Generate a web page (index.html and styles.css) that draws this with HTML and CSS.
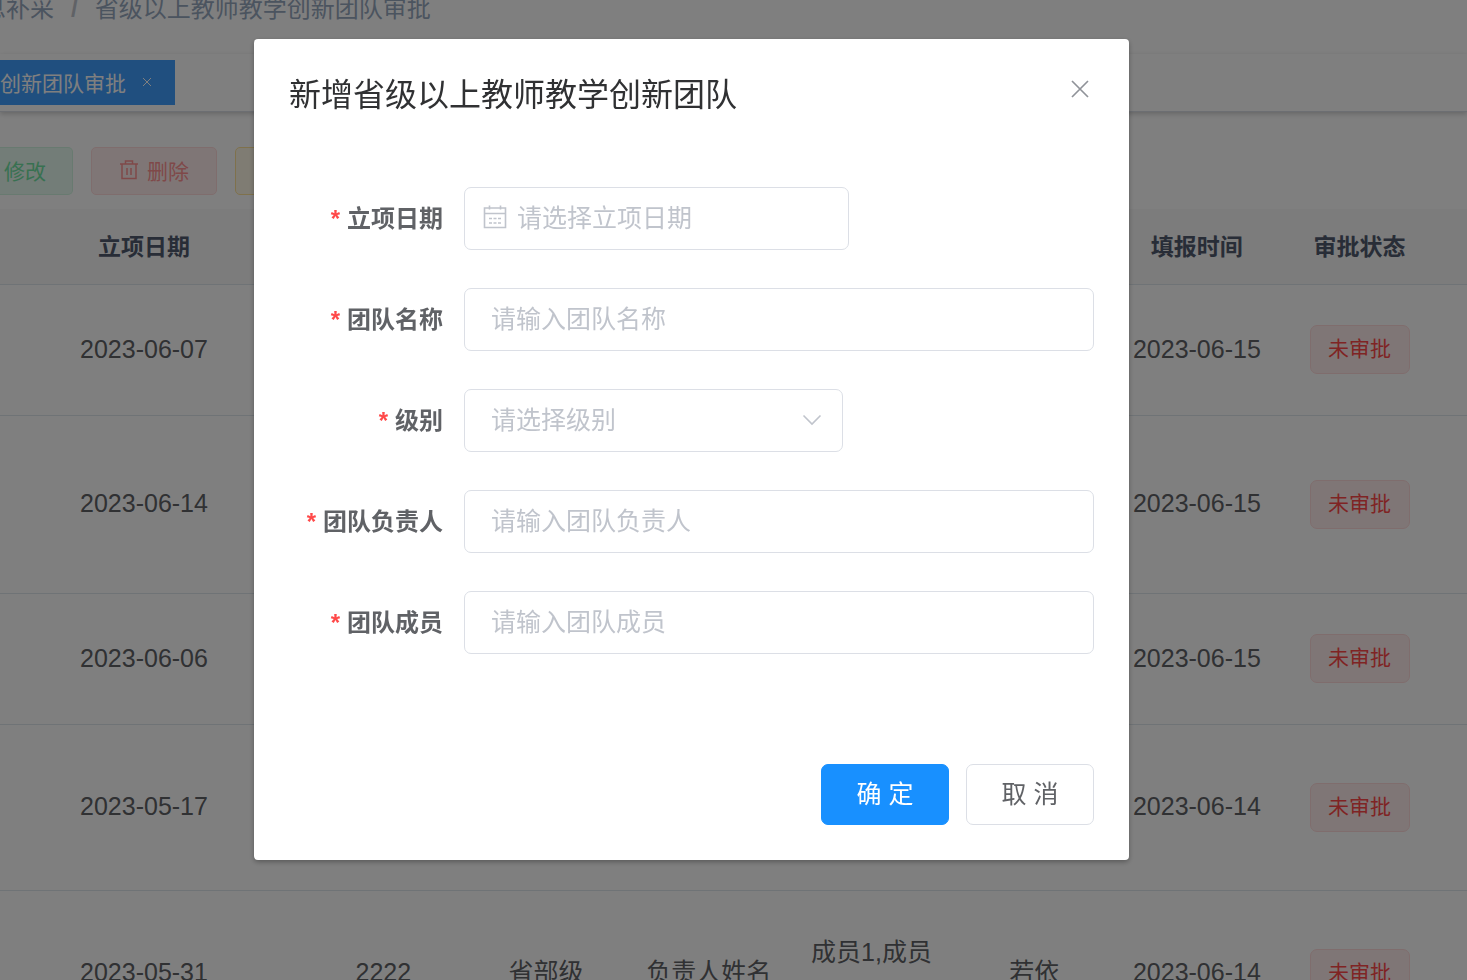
FILE: index.html
```html
<!DOCTYPE html>
<html lang="zh-CN">
<head>
<meta charset="utf-8">
<title>省级以上教师教学创新团队审批</title>
<link rel="stylesheet" href="styles.css">
</head>
<body>
<div class="page">
  <nav class="navbar">
    <a class="crumb" href="#">息补采</a>
    <span class="crumb-separator">/</span>
    <span class="crumb">省级以上教师教学创新团队审批</span>
  </nav>
  <div class="tags-view">
    <a class="tag-tab" href="#">创新团队审批
      <svg class="tag-close" viewBox="0 0 12 12"><path d="M2 2l8 8M10 2l-8 8"/></svg>
    </a>
  </div>
  <main>
    <div class="toolbar">
      <button class="btn btn-success" type="button" disabled>修改</button>
      <button class="btn btn-danger" type="button" disabled>
        <svg class="btn-icon" viewBox="0 0 20 20"><path d="M1 4h18M6.500 4V1h7v3M3 4v14.500h14V4M8 8v7M12 8v7"/></svg>
        删除
      </button>
      <button class="btn btn-warning" type="button" aria-label="导出"></button>
    </div>
    <table class="data-table">
      <colgroup><col class="col-date"><col><col><col><col><col><col><col><col class="col-end"></colgroup>
      <thead>
        <tr><th class="date">立项日期</th><th></th><th></th><th></th><th></th><th></th><th>填报时间</th><th>审批状态</th><th></th></tr>
      </thead>
      <tbody>
        <tr class="row-short"><td class="date">2023-06-07</td><td></td><td></td><td></td><td></td><td></td><td>2023-06-15</td><td><span class="status">未审批</span></td><td></td></tr>
        <tr class="row-tall"><td class="date">2023-06-14</td><td></td><td></td><td></td><td></td><td></td><td>2023-06-15</td><td><span class="status">未审批</span></td><td></td></tr>
        <tr class="row-short"><td class="date">2023-06-06</td><td></td><td></td><td></td><td></td><td></td><td>2023-06-15</td><td><span class="status">未审批</span></td><td></td></tr>
        <tr class="row-medium"><td class="date">2023-05-17</td><td></td><td></td><td></td><td></td><td></td><td>2023-06-14</td><td><span class="status">未审批</span></td><td></td></tr>
        <tr class="row-medium"><td class="date">2023-05-31</td><td>2222</td><td>省部级</td><td>负责人姓名</td><td class="members">成员1,成员</td><td>若依</td><td>2023-06-14</td><td><span class="status">未审批</span></td><td></td></tr>
      </tbody>
    </table>
  </main>
</div>

<div class="overlay">
  <section class="dialog" role="dialog" aria-labelledby="dialog-title">
    <header class="dialog-header">
      <h2 class="dialog-title" id="dialog-title">新增省级以上教师教学创新团队</h2>
      <button class="dialog-close" type="button" aria-label="关闭">
        <svg viewBox="0 0 20 20"><path d="M2 2l16 16M18 2L2 18"/></svg>
      </button>
    </header>
    <form class="form">
      <div class="form-item">
        <label class="form-label" for="date">立项日期</label>
        <div class="control control-date">
          <svg class="calendar" viewBox="0 0 24 24"><path d="M1.500 3h21v19.500h-21zM1.500 8.500h21M6.500.500v4M17.500.500v4M6 13.500h3M10.500 13.500h3M15 13.500h3M6 18h3M10.500 18h3M15 18h3"/></svg>
          <input class="field field-date" id="date" type="text" placeholder="请选择立项日期">
        </div>
      </div>
      <div class="form-item">
        <label class="form-label" for="name">团队名称</label>
        <div class="control"><input class="field" id="name" type="text" placeholder="请输入团队名称"></div>
      </div>
      <div class="form-item">
        <label class="form-label" for="level">级别</label>
        <div class="control control-select">
          <select class="field field-select" id="level"><option>请选择级别</option></select>
          <svg class="chevron" viewBox="0 0 20 12"><path d="M1.500 1.500l8.500 8.500 8.500-8.500"/></svg>
        </div>
      </div>
      <div class="form-item">
        <label class="form-label" for="leader">团队负责人</label>
        <div class="control"><input class="field" id="leader" type="text" placeholder="请输入团队负责人"></div>
      </div>
      <div class="form-item">
        <label class="form-label" for="members">团队成员</label>
        <div class="control"><input class="field" id="members" type="text" placeholder="请输入团队成员"></div>
      </div>
    </form>
    <footer class="dialog-footer">
      <button class="action action-primary" type="button">确 定</button>
      <button class="action" type="button">取 消</button>
    </footer>
  </section>
</div>
</body>
</html>
```
FILE: styles.css
```css
* {
  box-sizing: border-box;
}

body {
  margin: 0;
  overflow: hidden;
  background: #fff;
  color: #606266;
  font-family: "Liberation Sans", "Noto Sans CJK SC", sans-serif;
  font-size: 25px;
}

button,
input,
select {
  font-family: inherit;
}

svg {
  fill: none;
  stroke: currentColor;
}

.page {
  height: 100vh;
  overflow: hidden;
}

/* Top bars */
.navbar {
  display: flex;
  height: 54px;
  margin-left: -18px;
  line-height: 18px;
  font-size: 24px;
  white-space: nowrap;
  box-shadow: 0 2px 7px rgba(0, 21, 41, 0.08);
}

.crumb {
  color: #97a8be;
  text-decoration: none;
}

.crumb-separator {
  margin: 0 17px;
  color: #c0c4cc;
  font-weight: bold;
}

.tags-view {
  position: relative;
  display: flex;
  align-items: center;
  height: 58px;
  background: #fff;
  border-bottom: 1px solid #d8dce5;
  box-shadow: 0 2px 5px rgba(0, 0, 0, 0.2);
}

.tag-tab {
  display: flex;
  align-items: center;
  gap: 15px;
  height: 45px;
  padding-right: 22px;
  padding-bottom: 1px;
  background: #409eff;
  color: #fff;
  font-size: 21px;
  text-decoration: none;
}

.tag-close {
  width: 12px;
  height: 12px;
}

/* Toolbar */
.toolbar {
  display: flex;
  gap: 18px;
  padding-top: 35px;
  padding-bottom: 14px;
}

.btn {
  display: flex;
  align-items: center;
  justify-content: center;
  gap: 8px;
  width: 126px;
  height: 48px;
  padding: 0 0 3px;
  border: 1px solid;
  border-radius: 5px;
  font-size: 21px;
}

.btn-success {
  width: 73px;
  padding-right: 22px;
  border-color: #d0f5e0;
  border-left: 0;
  border-radius: 0 5px 5px 0;
  background: #e7faf0;
  color: #71e2a3;
}

.btn-danger {
  border-color: #ffdbdb;
  background: #ffeded;
  color: #ff9292;
}

.btn-warning {
  border-color: #ffe399;
  background: #fff8e6;
}

.btn-icon {
  width: 20px;
  height: 20px;
  stroke-width: 1.5;
}

/* Table */
.data-table {
  width: 100%;
  table-layout: fixed;
  border-collapse: separate;
  border-spacing: 0;
  text-align: center;
}

.col-date {
  width: 302px;
}

.col-end {
  width: 26px;
}

.data-table th {
  height: 76px;
  padding: 0 0 4px;
  background: #f8f8f9;
  border-bottom: 1px solid #dfe6ec;
  color: #515a6e;
  font-size: 23px;
}

.data-table td {
  padding: 0 0 3px;
  border-bottom: 1px solid #dfe6ec;
  font-size: 25px;
  line-height: 40px;
  white-space: nowrap;
}

.data-table .date {
  padding-right: 14px;
}

.data-table .members {
  padding-bottom: 43px;
}

.row-short {
  height: 131px;
}

.row-medium {
  height: 166px;
}

.row-tall {
  height: 178px;
}

.status {
  display: block;
  width: 100px;
  height: 49px;
  margin: 2px auto 0;
  border: 1px solid #ffdbdb;
  border-radius: 7px;
  background: #ffeded;
  color: #ff4949;
  font-size: 21px;
  line-height: 45px;
}

/* Dialog */
.overlay {
  position: fixed;
  inset: 0;
  display: flex;
  align-items: flex-start;
  justify-content: center;
  padding: 39px 84px 0 0;
  background: rgba(0, 0, 0, 0.5);
}

.dialog {
  width: 875px;
  max-width: 100%;
  padding: 35px;
  border-radius: 4px;
  background: #fff;
  box-shadow: 0 2px 5px rgba(0, 0, 0, 0.3);
}

.dialog-header {
  display: flex;
  align-items: flex-start;
  justify-content: space-between;
}

.dialog-title {
  margin: 0;
  color: #303133;
  font-size: 32px;
  font-weight: normal;
  line-height: 42px;
}

.dialog-close {
  display: flex;
  padding: 5px 4px;
  border: 0;
  background: none;
  color: #909399;
}

.dialog-close svg {
  width: 20px;
  height: 20px;
  stroke-width: 1.7;
}

.form {
  display: flex;
  flex-direction: column;
  gap: 38px;
  padding-top: 71px;
}

.form-item {
  display: flex;
  height: 63px;
}

.form-label {
  width: 175px;
  padding-right: 21px;
  font-size: 24px;
  font-weight: bold;
  line-height: 64px;
  text-align: right;
  white-space: nowrap;
}

.form-label::before {
  content: "*";
  margin-right: 7px;
  color: #ff4949;
}

.control {
  position: relative;
  flex: 1;
}

.control-date {
  flex: 0 0 385px;
}

.control-select {
  flex: 0 0 379px;
}

.field {
  display: block;
  width: 100%;
  height: 63px;
  padding: 0 26px;
  border: 1px solid #dcdfe6;
  border-radius: 7px;
  background: #fff;
  color: #606266;
  font-size: 25px;
}

.field::placeholder {
  color: #c0c4cc;
}

.field-date {
  padding-left: 52px;
}

.field-select {
  padding-bottom: 2px;
  appearance: none;
  color: #c0c4cc;
}

.calendar {
  position: absolute;
  top: 18px;
  left: 19px;
  width: 24px;
  height: 24px;
  color: #c0c4cc;
  stroke-width: 1.6;
}

.chevron {
  position: absolute;
  top: 25px;
  right: 21px;
  width: 20px;
  height: 12px;
  color: #c0c4cc;
  stroke-width: 1.6;
}

.dialog-footer {
  display: flex;
  justify-content: flex-end;
  gap: 17px;
  padding-top: 110px;
}

.action {
  width: 128px;
  height: 61px;
  padding: 0 0 6px;
  border: 1px solid #dcdfe6;
  border-radius: 7px;
  background: #fff;
  color: #606266;
  font-size: 25px;
}

.action-primary {
  border-color: #1890ff;
  background: #1890ff;
  color: #fff;
}
```
